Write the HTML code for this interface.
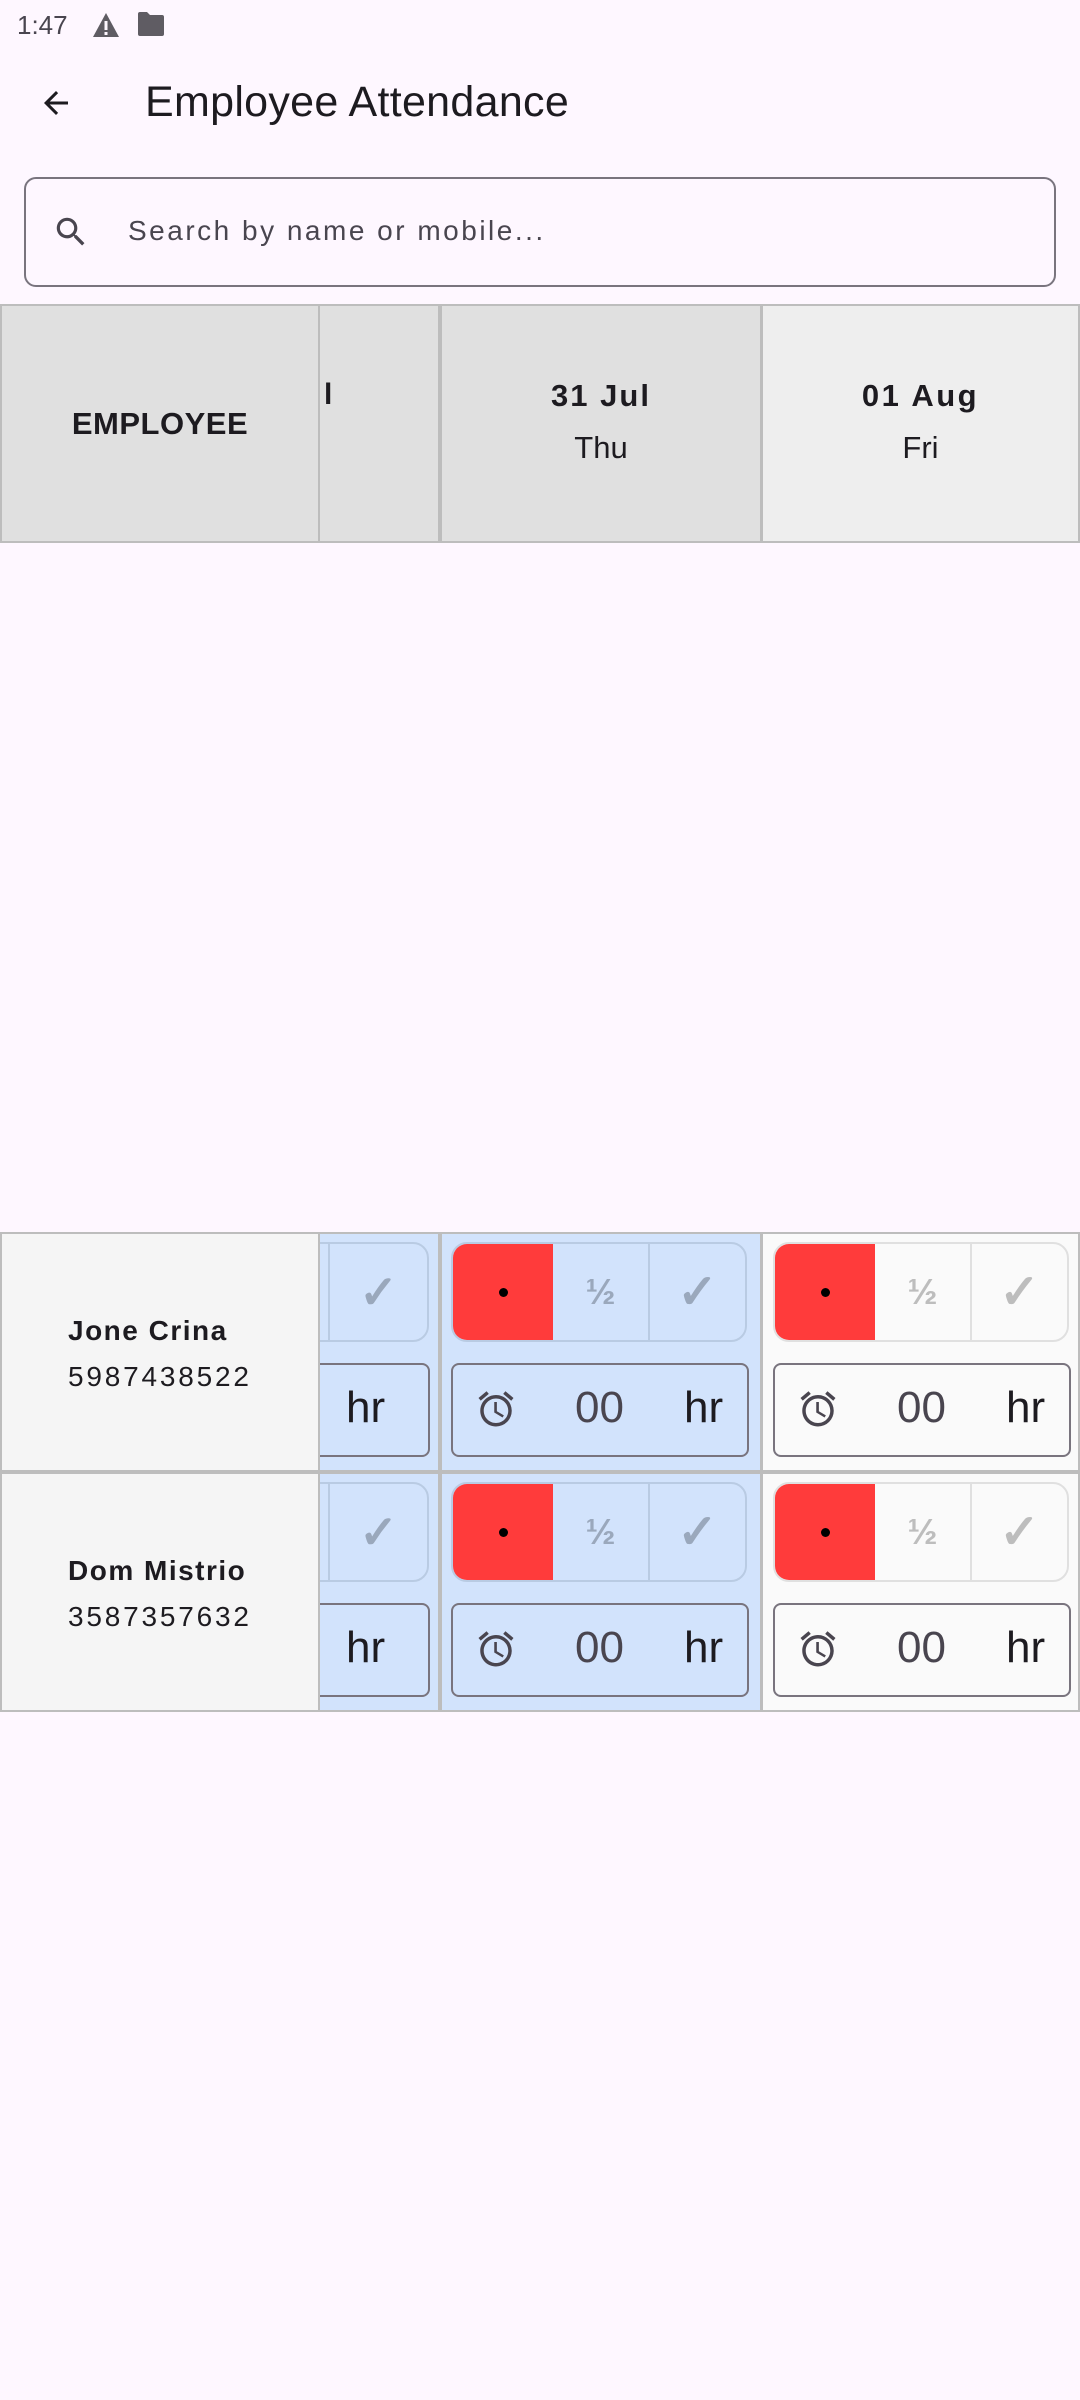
<!DOCTYPE html>
<html><head><meta charset="utf-8"><style>
*{margin:0;padding:0;box-sizing:border-box}
body{width:1080px;height:2400px;background:#fef7ff;position:relative;overflow:hidden;font-family:"Liberation Sans",sans-serif;color:#1d1b20}
.a{position:absolute}
.c{display:flex;align-items:center;justify-content:center}
.cell{position:absolute;border:2px solid #bdbdbd}
.tg{position:absolute;height:100px;border:2px solid #b9cbe3;border-radius:16px;overflow:hidden;display:flex}
.tg div{display:flex;align-items:center;justify-content:center;height:100%}
.hb{position:absolute;height:94px;border:2px solid #79747e;border-radius:8px}
</style></head><body>
<div class="a" style="left:17px;top:10px;font-size:26px;color:#49454f">1:47</div>
<svg class="a" style="left:92px;top:12px" width="28" height="26" viewBox="0 0 28 26"><path d="M14 1 L27 25 H1 Z" fill="#5f5c63"/><rect x="12.5" y="9" width="3" height="9" fill="#fef7ff"/><rect x="12.5" y="20" width="3" height="3" fill="#fef7ff"/></svg>
<svg class="a" style="left:137px;top:12px" width="28" height="24" viewBox="0 0 28 24"><path d="M3 0 H10 L13 3 H25 Q27 3 27 5 V22 Q27 24 25 24 H3 Q1 24 1 22 V2 Q1 0 3 0Z" fill="#5f5c63"/></svg>

<svg class="a" style="left:38px;top:85px" width="36" height="36" viewBox="0 0 24 24"><path d="M20 11H7.83l5.59-5.59L12 4l-8 8 8 8 1.41-1.41L7.83 13H20v-2z" fill="#1d1b20"/></svg>
<div class="a" style="left:145px;top:78px;font-size:43px;letter-spacing:0.3px">Employee Attendance</div>

<div class="a" style="left:24px;top:177px;width:1032px;height:110px;border:2px solid #79747e;border-radius:12px"></div>
<svg class="a" style="left:52px;top:213px" width="38" height="38" viewBox="0 0 24 24"><path d="M15.5 14h-.79l-.28-.27A6.47 6.47 0 0 0 16 9.5 6.5 6.5 0 1 0 9.5 16c1.61 0 3.09-.59 4.23-1.57l.27.28v.79l5 4.99L20.49 19l-4.99-5zm-6 0C7.01 14 5 11.99 5 9.5S7.01 5 9.5 5 14 7.01 14 9.5 11.99 14 9.5 14z" fill="#49454f"/></svg>
<div class="a" style="left:128px;top:215px;font-size:28px;color:#49454f;letter-spacing:2.5px">Search by name or mobile...</div>

<!-- header -->
<div class="cell c" style="left:0;top:304px;width:320px;height:239px;background:#e0e0e0;font-weight:bold;font-size:31px;letter-spacing:0.5px">EMPLOYEE</div>
<div class="cell" style="left:318px;top:304px;width:122px;height:239px;background:#e0e0e0"><div class="a" style="left:4px;top:72px;font-weight:bold;font-size:30px">l</div></div>
<div class="cell" style="left:438px;top:304px;width:324px;height:239px;background:#e0e0e0;text-align:center;border-left-width:4px"><div style="margin-top:72px;font-weight:bold;font-size:31px;letter-spacing:2px">31 Jul</div><div style="margin-top:16px;font-size:31px">Thu</div></div>
<div class="cell" style="left:760px;top:304px;width:320px;height:239px;background:#eeeeee;text-align:center;border-left-width:3px"><div style="margin-top:72px;font-weight:bold;font-size:31px;letter-spacing:2.5px">01 Aug</div><div style="margin-top:16px;font-size:31px">Fri</div></div>

<!-- rows -->
<div id="rows"></div>
<script>
const rows=[["Jone Crina","5987438522",1232],["Dom Mistrio","3587357632",1472]];
let h="";
const clock='<svg width="42" height="42" viewBox="0 0 24 24"><path d="M22 5.72l-4.6-3.86-1.29 1.53 4.6 3.86L22 5.72zM7.88 3.39L6.6 1.86 2 5.71l1.29 1.53 4.59-3.850zM12.5 8H11v6l4.75 2.85.75-1.23-4-2.37V8zM12 4c-4.97 0-9 4.030-9 9s4.02 9 9 9a9 9 0 0 0 0-18zm0 16c-3.87 0-7-3.13-7-7s3.13-7 7-7 7 3.13 7 7-3.13 7-7 7z" fill="#49454f"/></svg>';
for(const [n,p,y] of rows){
 h+=`<div class="cell" style="left:0;top:${y}px;width:320px;height:240px;background:#f5f5f5"><div class="a" style="left:66px;top:81px;font-weight:bold;font-size:28px;letter-spacing:1.5px">${n}</div><div class="a" style="left:66px;top:127px;font-size:28px;letter-spacing:2.8px">${p}</div></div>`;
 h+=`<div class="cell" style="left:318px;top:${y}px;width:122px;height:240px;background:#d2e3fc;overflow:hidden">
 <div class="tg" style="left:-40px;top:8px;width:149px"><div style="width:48px;border-right:2px solid #b9cbe3"></div><div style="flex:1;font-size:46px;color:#9aa8bc;font-weight:bold">✓</div></div>
 <div class="hb" style="left:-40px;top:129px;width:150px"><div class="a" style="left:64px;top:18px;font-size:44px">hr</div></div></div>`;
 const col=(x,w,bg,bd,fc,bl)=>`<div class="cell" style="left:${x}px;top:${y}px;width:${w}px;height:240px;background:${bg};border-left-width:${bl}px">
 <div class="tg" style="left:${11-bl+2}px;top:8px;width:296px;border-color:${bd}"><div style="width:100px;background:#ff3b3b"><span style="width:9px;height:9px;border-radius:50%;background:#000;display:block"></span></div><div style="width:97px;border-right:2px solid ${bd};font-size:36px;font-weight:bold;color:${fc}">½</div><div style="flex:1;font-size:48px;font-weight:bold;color:${fc}">✓</div></div>
 <div class="hb" style="left:${11-bl+2}px;top:129px;width:298px"><div class="a" style="left:22px;top:23px">${clock}</div><div class="a" style="left:122px;top:18px;font-size:44px;color:#49454f">00</div><div class="a" style="left:231px;top:18px;font-size:44px">hr</div></div></div>`;
 h+=col(438,324,"#d2e3fc","#b9cbe3","#9aa8bc",4);
 h+=col(760,320,"#fafafa","#e0e0e0","#bdbdbd",3);
}
document.getElementById("rows").innerHTML=h;
</script>
</body></html>
